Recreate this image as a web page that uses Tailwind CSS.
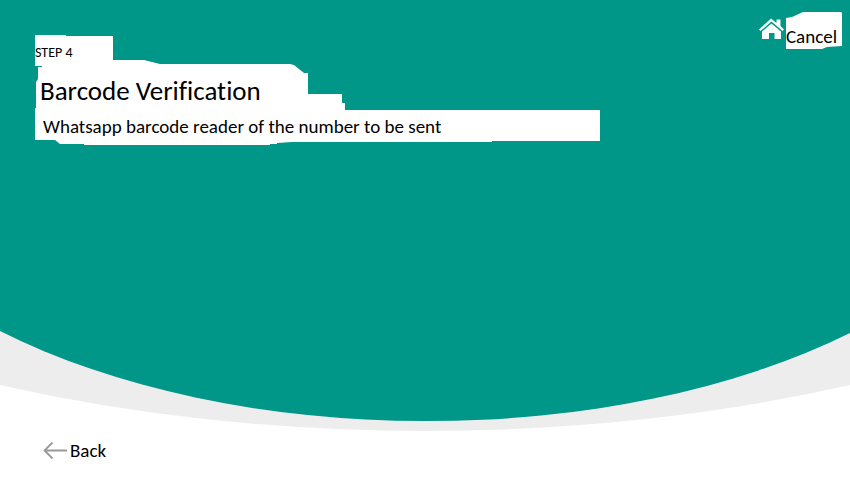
<!DOCTYPE html>
<html lang="en">
<head>
<meta charset="utf-8">
<meta name="viewport" content="width=device-width, initial-scale=1">
<title>Barcode Verification</title>
<script src="https://cdn.jsdelivr.net/npm/@tailwindcss/browser@4"></script>
</head>
<body class="bg-white text-black font-[Carlito,Calibri,Lato,sans-serif] [font-variant-ligatures:none]">
<div class="relative isolate flex min-h-screen flex-col">
  <svg class="absolute inset-x-0 top-0 -z-10 h-[432px] w-full" viewBox="0 0 850 432" preserveAspectRatio="none" aria-hidden="true">
    <path fill="#ededed" d="M0 0H850V385A1002 487 0 0 1 0 385Z"/>
    <path fill="#009788" d="M0 0H850V333A613 319 0 0 1 0 331Z"/>
  </svg>
  <header class="flex items-start justify-between pl-[35px] pr-2">
    <div class="relative isolate w-[565px] pt-[43px]">
      <svg class="absolute left-0 top-0 -z-10 h-[145px] w-[565px]" viewBox="35 0 565 145" fill="#fff" aria-hidden="true">
        <path d="M35 35H66V36H113V60H144L148 61L160 64H290L294 65L304 73H308V94H342V103H345V110H600V141H492V142H292L277 143V144H270V145H84V144H60L55 140H35V108H36V82L38 79V67H42V66H35Z"/>
      </svg>
      <p class="text-[14px] leading-5">STEP 4</p>
      <h1 class="mt-3 pl-[5px] text-[27px] leading-8">Barcode Verification</h1>
      <p class="mt-2 pl-2 text-[19px] leading-6">Whatsapp barcode reader of the number to be sent</p>
    </div>
    <a href="#" class="relative isolate flex h-[49px] items-end pt-3">
      <svg class="mb-[7px] mr-[2px] h-6 w-[25px]" viewBox="759 18 25 24" fill="#f8fdfc" aria-hidden="true">
        <path d="M771 18.500L776.500 23V19.500H780.500V26L784 29.500L782.500 31L771.500 21.500L760.500 31L759 29.500ZM771.500 23.500L781 31.500V39H774.500V33H769V39H762V31.500Z"/>
      </svg>
      <svg class="absolute right-0 top-3 -z-10 h-[37px] w-14" viewBox="786 12 56 37" fill="#fff" aria-hidden="true">
        <path d="M786 18L792 17L803 12H841L842 13V46L827 47L822 49H786Z"/>
      </svg>
      <span class="pr-[5px] text-[19px] leading-6">Cancel</span>
    </a>
  </header>
  <footer class="mt-auto pb-8 pl-[43px]">
    <a href="#" class="inline-flex items-center gap-[3px] text-[19px] leading-6">
      <svg class="h-5 w-6" viewBox="0 0 24 20" fill="none" stroke="#999" stroke-width="1.8" aria-hidden="true"><path d="M24 9.500H1.500M9.500 1.500L1.500 9.500L9.500 17.500"/></svg>
      Back
    </a>
  </footer>
</div>
</body>
</html>
